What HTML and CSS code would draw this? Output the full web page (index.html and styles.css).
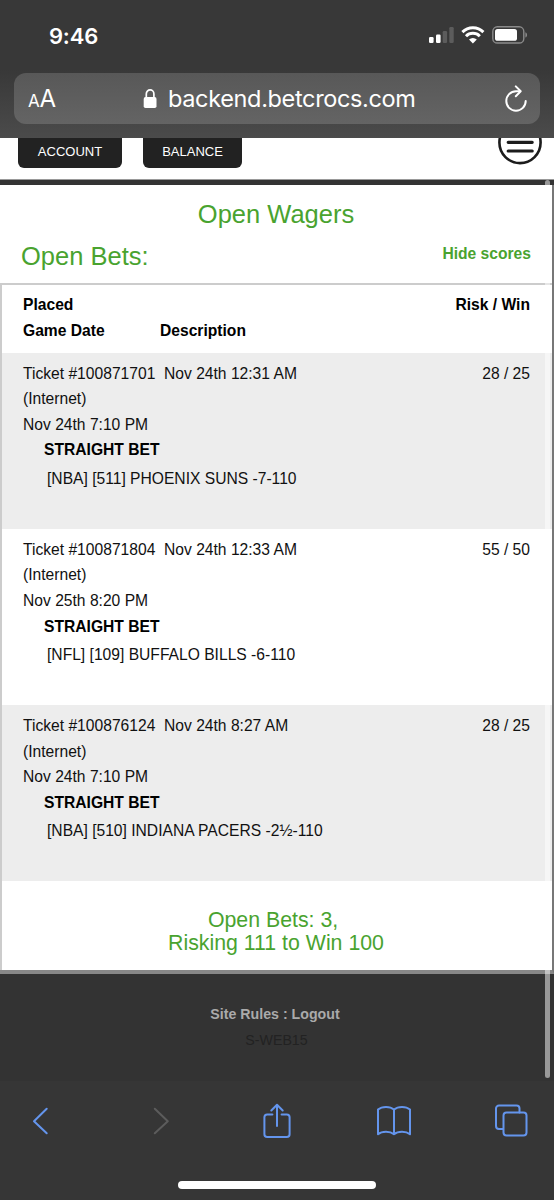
FILE: index.html
```html
<!DOCTYPE html>
<html lang="en">
<head>
    <meta charset="UTF-8">
    <meta name="viewport" content="width=device-width, initial-scale=1.0">
    <title>Open Wagers</title>
    <link rel="stylesheet" href="styles.css">
</head>
<body>
    <header class="browser-top">
        <div class="status-bar">
            <span class="time">9:46</span>
            <svg class="status-icons" width="100" height="20" viewBox="0 0 100 20">
                <rect x="1" y="12" width="4.6" height="6" rx="1.2" fill="#fff"/>
                <rect x="8" y="9.5" width="4.6" height="8.5" rx="1.2" fill="#fff"/>
                <rect x="14.7" y="6" width="4.4" height="12" rx="1.2" fill="#5c5c5c"/>
                <rect x="21.3" y="2" width="4.4" height="16" rx="1.2" fill="#5c5c5c"/>
                <g fill="none" stroke="#fff" stroke-width="3">
                    <path d="M34.4 7.1a15 15 0 0 1 21 0"/>
                    <path d="M38 11.2a9.8 9.8 0 0 1 13.8 0"/>
                </g>
                <path d="M41 14.6a5.6 5.6 0 0 1 7.8 0L44.9 18.4z" fill="#fff"/>
                <rect x="64.8" y="1.8" width="31" height="16.2" rx="4.6" fill="none" stroke="#8a8a8a" stroke-width="1.4"/>
                <rect x="67" y="4" width="22" height="11.8" rx="2.6" fill="#fff"/>
                <path d="M97.4 7.2c2.2 1 2.2 4.4 0 5.4z" fill="#8a8a8a"/>
            </svg>
        </div>
        <div class="address-bar">
            <span class="text-size"><small>A</small>A</span>
            <span class="url">
                <svg width="14" height="20" viewBox="0 0 14 20">
                    <rect x="0.7" y="8.1" width="12.8" height="10.9" rx="1.8" fill="#fff"/>
                    <path d="M3.3 9.2V4.9a3.8 4 0 0 1 7.6 0v4.3" fill="none" stroke="#fff" stroke-width="1.7"/>
                </svg>
                backend.betcrocs.com
            </span>
            <svg class="reload" width="24" height="28" viewBox="0 0 24 28">
                <g fill="none" stroke="#fff" stroke-width="2" stroke-linecap="round" stroke-linejoin="round">
                    <path d="M16 6.3H12A9.7 9.7 0 1 0 21.7 16"/>
                    <path d="M11.8 1.4l4.900 4.900-4.900 4.900"/>
                </g>
            </svg>
        </div>
    </header>

    <div class="page">
        <nav>
            <a class="button account" href="#">ACCOUNT</a>
            <a class="button balance" href="#">BALANCE</a>
            <svg class="menu" width="46" height="28" viewBox="0 0 46 28">
                <g fill="none" stroke="#1c1c1c" stroke-linecap="round">
                    <circle cx="23" cy="4.5" r="20.6" stroke-width="2.6"/>
                    <path d="M11.2 4.3h24M11.2 13h24" stroke-width="3.2"/>
                </g>
            </svg>
        </nav>

        <main>
            <h1>Open Wagers</h1>
            <div class="subhead">
                <h2>Open Bets:</h2>
                <a href="#">Hide scores</a>
            </div>
            <div class="bets">
                <div class="bets-head">
                    <span>Placed</span><span class="risk">Risk / Win</span>
                    <span>Game Date</span><span>Description</span>
                </div>
                <div class="bet shaded">
                    <div class="ticket"><span>Ticket #100871701&nbsp; Nov 24th 12:31 AM</span><span>28 / 25</span></div>
                    <div>(Internet)</div>
                    <div>Nov 24th 7:10 PM</div>
                    <div class="type">STRAIGHT BET</div>
                    <div class="pick">[NBA] [511] PHOENIX SUNS -7-110</div>
                </div>
                <div class="bet">
                    <div class="ticket"><span>Ticket #100871804&nbsp; Nov 24th 12:33 AM</span><span>55 / 50</span></div>
                    <div>(Internet)</div>
                    <div>Nov 25th 8:20 PM</div>
                    <div class="type">STRAIGHT BET</div>
                    <div class="pick">[NFL] [109] BUFFALO BILLS -6-110</div>
                </div>
                <div class="bet shaded">
                    <div class="ticket"><span>Ticket #100876124&nbsp; Nov 24th 8:27 AM</span><span>28 / 25</span></div>
                    <div>(Internet)</div>
                    <div>Nov 24th 7:10 PM</div>
                    <div class="type">STRAIGHT BET</div>
                    <div class="pick">[NBA] [510] INDIANA PACERS -2½-110</div>
                </div>
                <div class="total">Open Bets: 3,&nbsp;<br>Risking 111 to Win 100</div>
            </div>
        </main>

        <footer>
            <div class="links"><a href="#">Site Rules</a> : <a href="#">Logout</a></div>
            <div class="server">S-WEB15</div>
        </footer>
        <div class="scrollbar"></div>
    </div>

    <div class="browser-bottom">
        <div class="toolbar">
            <svg width="18" height="30" viewBox="0 0 18 30"><path d="M14.7 2.8L2 15.2l12.7 12" class="icon"/></svg>
            <svg width="18" height="30" viewBox="0 0 18 30"><path d="M2.8 2.8L15.8 15.2 2.8 27.2" class="icon disabled"/></svg>
            <svg width="30" height="38" viewBox="0 0 30 38">
                <path d="M10.4 12.5H5.2a2.8 2.8 0 0 0-2.8 2.8v17a2.8 2.8 0 0 0 2.8 2.8h19.6a2.8 2.8 0 0 0 2.8-2.8V15.3a2.8 2.8 0 0 0-2.8-2.8h-5.2M15 24V2.800M9.300 8.500L15 2.800l5.700 5.700" class="icon"/>
            </svg>
            <svg width="36" height="32" viewBox="0 0 36 32">
                <path d="M18 4.600C14 1 6 1 2 4.600V29.300C6 26 14 26 18 29.300C22 26 30 26 34 29.300V4.600C30 1 22 1 18 4.600V29.300" class="icon"/>
            </svg>
            <svg width="34" height="34" viewBox="0 0 34 34">
                <path d="M9 25H5a3 3 0 0 1-3-3V4.500a3 3 0 0 1 3-3h17.500a3 3 0 0 1 3 3v4" class="icon"/>
                <rect x="9.5" y="8.5" width="23" height="23" rx="3" class="icon"/>
            </svg>
        </div>
        <div class="home-indicator"></div>
    </div>
</body>
</html>
```

FILE: styles.css
```css
* {
    box-sizing: border-box;
}
body {
    margin: 0;
    width: 554px;
    height: 1200px;
    overflow: hidden;
    display: flex;
    flex-direction: column;
    background-color: #333;
    font-family: "Liberation Sans", Arial, sans-serif;
}
a {
    text-decoration: none;
    color: inherit;
}
svg {
    display: block;
    flex: none;
}

/* Browser top */
.browser-top {
    height: 138px;
    padding: 0 14px;
    background: linear-gradient(#383838 50%, #4b4b4b);
    color: white;
    font-family: Inter, sans-serif;
}
.status-bar {
    height: 73px;
    padding: 25px 12px 0 35px;
    display: flex;
    justify-content: space-between;
}
.time {
    font-size: 22px;
    font-weight: 600;
    line-height: 22px;
    letter-spacing: -0.2px;
}
.address-bar {
    height: 51px;
    padding: 0 12px 0 14px;
    display: flex;
    align-items: center;
    justify-content: space-between;
    border-radius: 12px;
    background: linear-gradient(#585858, #646464);
}
.text-size {
    width: 30px;
    white-space: nowrap;
    font-size: 24px;
    letter-spacing: -0.3px;
}
.text-size small {
    font-size: 17px;
}
.url {
    display: flex;
    align-items: center;
    gap: 11px;
    margin-left: 85px;
    margin-right: auto;
    font-size: 23.5px;
    letter-spacing: -0.35px;
}

/* Page */
.page {
    position: relative;
    height: 943px;
    flex: none;
    font-size: 15.63px;
    line-height: 25.65px;
}
nav {
    height: 42px;
    padding: 0 11px 0 18px;
    display: flex;
    align-items: flex-start;
    background-color: white;
    border-bottom: 1px solid #999;
}
.button {
    height: 30px;
    margin-right: 21px;
    border-radius: 0 0 6px 6px;
    background-color: #222;
    color: white;
    font-size: 13px;
    line-height: 28px;
    text-align: center;
}
.account {
    width: 104px;
}
.balance {
    width: 99px;
}
.menu {
    margin-left: auto;
}
main {
    height: 789px;
    margin-top: 5px;
    background-color: white;
    border-right: 2px solid #777;
    border-bottom: 4px solid #888;
}
h1, h2 {
    margin: 0;
    color: #49a32f;
    font-size: 25.5px;
    font-weight: normal;
}
h1 {
    padding-top: 15px;
    line-height: 29px;
    text-align: center;
}
.subhead {
    height: 54px;
    padding: 0 21px;
    display: flex;
    justify-content: space-between;
}
.subhead h2 {
    line-height: 54px;
}
.subhead a {
    color: #49a32f;
    font-weight: bold;
    line-height: 49px;
}
.bets {
    height: 687px;
    border-top: 2px solid #ccc;
    border-left: 2px solid #ccc;
    color: #111;
}
.bets-head {
    height: 67.5px;
    padding: 7px 22px 0 21px;
    display: grid;
    grid-template-columns: 137px 1fr;
    align-content: start;
    color: black;
    font-weight: bold;
}
.risk {
    text-align: right;
}
.bet {
    height: 176.3px;
    padding: 8px 22px 0 21px;
}
.shaded {
    background-color: #ededed;
}
.ticket {
    display: flex;
    justify-content: space-between;
}
.type {
    padding-left: 21px;
    color: black;
    font-weight: bold;
}
.pick {
    padding: 2.5px 0 0 24px;
}
.total {
    padding: 28px 2px 0 0;
    color: #49a32f;
    font-size: 21.3px;
    line-height: 23px;
    text-align: center;
}
footer {
    padding: 28px 4px 0 0;
    color: #aaa;
    font-size: 14.2px;
    text-align: center;
}
.links {
    font-weight: bold;
}
.server {
    padding-left: 3px;
    color: #222;
}
.scrollbar {
    position: absolute;
    top: 42px;
    right: 4px;
    width: 5px;
    height: 898px;
    border-radius: 3px;
    background-color: rgba(255, 255, 255, 0.5);
}

/* Browser bottom */
.browser-bottom {
    flex: 1;
    background-color: #363636;
}
.toolbar {
    height: 80px;
    padding: 0 26px 0 32px;
    display: grid;
    grid-template-columns: 120px 110px 114px 118px 34px;
    align-items: center;
}
.icon {
    fill: none;
    stroke: #6495ed;
    stroke-width: 2;
    stroke-linecap: round;
    stroke-linejoin: round;
}
.disabled {
    stroke: #5c5c5c;
}
.home-indicator {
    width: 198px;
    height: 8px;
    margin: 20px auto 0;
    border-radius: 4px;
    background-color: white;
}
```
